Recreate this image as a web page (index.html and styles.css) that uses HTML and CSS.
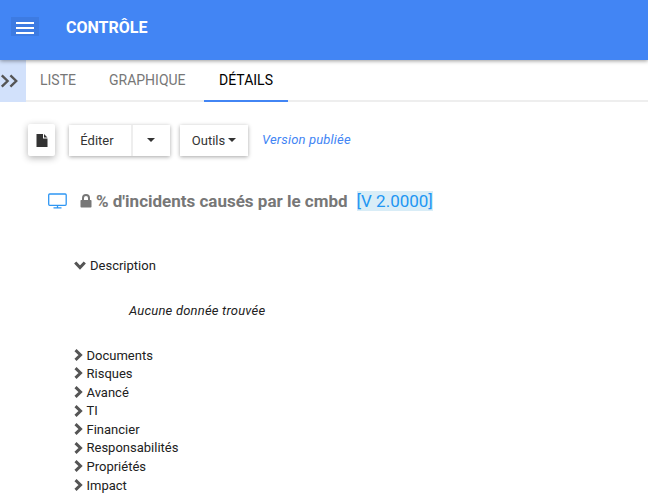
FILE: index.html
```html
<!DOCTYPE html>
<html lang="fr">

<head>
    <meta charset="UTF-8">
    <meta name="viewport" content="width=device-width, initial-scale=1.0">
    <title>Contrôle</title>
    <link rel="stylesheet" href="styles.css">
</head>

<body>
    <svg class="sprite">
        <symbol id="chevron" viewBox="0 0 10 12">
            <path d="M1.5 1.2 L6.5 6 L1.5 10.8" fill="none" stroke="currentColor" stroke-width="3" />
        </symbol>
    </svg>

    <header class="header">
        <button class="menu-btn" aria-label="Menu">
            <span></span>
            <span></span>
            <span></span>
        </button>
        <h1 class="header-title">CONTRÔLE</h1>
    </header>

    <div class="tab-bar">
        <button class="expand-btn" aria-label="Ouvrir">
            <svg width="18" height="14" viewBox="0 0 18 14">
                <path d="M1.8 1.3 L7.6 7 L1.8 12.7 M10.4 1.3 L16.2 7 L10.4 12.7" fill="none" stroke="#555" stroke-width="2.4" />
            </svg>
        </button>
        <nav class="tabs">
            <a class="tab">LISTE</a>
            <a class="tab">GRAPHIQUE</a>
            <a class="tab active">DÉTAILS</a>
        </nav>
    </div>

    <main class="content">
        <div class="toolbar">
            <button class="btn btn-file" aria-label="Document">
                <svg width="12" height="13" viewBox="0 0 12 13">
                    <path d="M0.5 0 H7 V4.5 H11.5 V13 H0.5 Z M8 0 L11.5 3.6 H8 Z" fill="#333" />
                </svg>
            </button>
            <div class="btn-group">
                <button class="btn btn-edit">Éditer</button>
                <button class="btn btn-toggle" aria-label="Plus"><span class="caret"></span></button>
            </div>
            <button class="btn btn-tools">Outils<span class="caret"></span></button>
            <span class="status">Version publiée</span>
        </div>

        <h2 class="title">
            <svg class="icon-screen" width="20" height="16" viewBox="0 0 20 16">
                <rect x="0.7" y="1" width="17.5" height="11.3" rx="1" fill="none" stroke="#2e96f3" stroke-width="1.3" />
                <path d="M9.5 12.5 V14.5 M5.5 14.8 H13.5" fill="none" stroke="#2e96f3" stroke-width="1.3" />
            </svg>
            <svg class="icon-lock" width="12" height="14" viewBox="0 0 12 14">
                <path d="M3 7 V4 A3 3 0 0 1 9 4 V7" fill="none" stroke="#777" stroke-width="2" />
                <rect x="0.5" y="6" width="11" height="7.5" rx="0.8" fill="#777" />
            </svg>
            <span class="title-text">% d'incidents causés par le cmbd</span>
            <span class="version">[V 2.0000]</span>
        </h2>

        <section class="description">
            <div class="description-head">
                <svg class="chevron-down" width="10" height="12"><use href="#chevron" /></svg>
                <span>Description</span>
            </div>
            <p class="empty">Aucune donnée trouvée</p>
        </section>

        <ul class="sections">
            <li><svg width="10" height="12"><use href="#chevron" /></svg>Documents</li>
            <li><svg width="10" height="12"><use href="#chevron" /></svg>Risques</li>
            <li><svg width="10" height="12"><use href="#chevron" /></svg>Avancé</li>
            <li><svg width="10" height="12"><use href="#chevron" /></svg>TI</li>
            <li><svg width="10" height="12"><use href="#chevron" /></svg>Financier</li>
            <li><svg width="10" height="12"><use href="#chevron" /></svg>Responsabilités</li>
            <li><svg width="10" height="12"><use href="#chevron" /></svg>Propriétés</li>
            <li><svg width="10" height="12"><use href="#chevron" /></svg>Impact</li>
        </ul>
    </main>
</body>

</html>
```
FILE: styles.css
```css
* {
    box-sizing: border-box;
}

body {
    margin: 0;
    height: 504px;
    overflow: hidden;
    background-color: #fff;
    font-family: Roboto, "Liberation Sans", sans-serif;
    font-size: 13px;
    line-height: 18.57px;
    color: #212121;
}

button {
    border: none;
    padding: 0;
    font: inherit;
    color: inherit;
    cursor: pointer;
}

.sprite {
    display: none;
}

.header {
    position: relative;
    display: flex;
    align-items: flex-start;
    height: 60px;
    padding: 17px 11px 0;
    background-color: #4285f4;
    box-shadow: 0 1px 4px rgba(0, 0, 0, 0.4);
}

.menu-btn {
    display: flex;
    flex-direction: column;
    justify-content: center;
    align-items: center;
    gap: 3px;
    width: 28px;
    height: 19px;
    padding-top: 2px;
    background-color: #3d7be2;
}

.menu-btn span {
    width: 18px;
    height: 2px;
    background-color: #fff;
}

.header-title {
    margin: 0 0 0 27px;
    font-size: 16px;
    line-height: 21px;
    font-weight: 700;
    color: #fff;
}

.tab-bar {
    display: flex;
    height: 42px;
}

.expand-btn {
    display: flex;
    align-items: center;
    width: 26px;
    background-color: #d2e1fb;
}

.tabs {
    display: flex;
    flex: 1;
    border-bottom: 2px solid #eee;
}

.tab {
    height: 42px;
    padding: 0 15px;
    margin-right: 3px;
    font-size: 14px;
    line-height: 40px;
    color: #777;
}

.tab:first-child {
    padding-left: 14px;
}

.tab.active {
    padding: 0 15px 0 15.5px;
    border-bottom: 2px solid #4285f4;
    color: #000;
}

.content {
    padding-left: 28px;
}

.toolbar {
    display: flex;
    align-items: flex-start;
    padding-top: 22px;
}

.btn {
    display: flex;
    justify-content: center;
    align-items: center;
    height: 31px;
    margin-top: 1px;
    padding-top: 1px;
    background-color: #fff;
    color: #333;
}

.btn-file {
    width: 27px;
    height: 32px;
    margin: 0 14px 0 0;
    border-radius: 2px;
    box-shadow: 0 2px 7px rgba(0, 0, 0, 0.3);
}

.btn-group {
    display: flex;
    height: 31px;
    margin: 1px 10px 0 0;
    box-shadow: 0 1px 4px rgba(0, 0, 0, 0.35);
}

.btn-group .btn {
    margin-top: 0;
}

.btn-edit {
    width: 62px;
    padding-right: 6px;
}

.btn-toggle {
    width: 39px;
    padding-right: 2px;
    border-left: 2px solid #eee;
}

.btn-tools {
    width: 68px;
    box-shadow: 0 1px 4px rgba(0, 0, 0, 0.35);
}

.caret {
    margin-bottom: 2px;
    border-top: 4px solid #333;
    border-left: 4px solid transparent;
    border-right: 4px solid transparent;
}

.btn-tools .caret {
    margin-left: 3px;
}

.status {
    margin: 7px 0 0 14px;
    font-style: italic;
    letter-spacing: 0.17px;
    color: #4285f4;
}

.title {
    display: flex;
    align-items: center;
    height: 20px;
    margin: 35px 0 0 20px;
    font-size: 17px;
    line-height: 20px;
    font-weight: 700;
    color: #777;
}

.icon-lock {
    margin: 0 4px 0 12px;
}

.version {
    margin-left: 9px;
    background-color: #d9edf7;
    font-weight: 400;
    color: #2196f3;
}

.description {
    margin: 46px 0 0 46px;
}

.description-head {
    display: flex;
    align-items: center;
    gap: 4px;
}

.chevron-down {
    margin: 0 1px;
    transform: rotate(90deg);
}

.empty {
    margin: 26px 0 0 55px;
    font-style: italic;
    letter-spacing: 0.2px;
}

.sections {
    list-style: none;
    margin: 26.5px 0 0 46px;
    padding: 0;
}

.sections li {
    display: flex;
    align-items: center;
    height: 18.57px;
}

.sections svg {
    margin: 0 2.5px 2px 0;
}

.description svg,
.sections svg {
    color: #555;
}
```
